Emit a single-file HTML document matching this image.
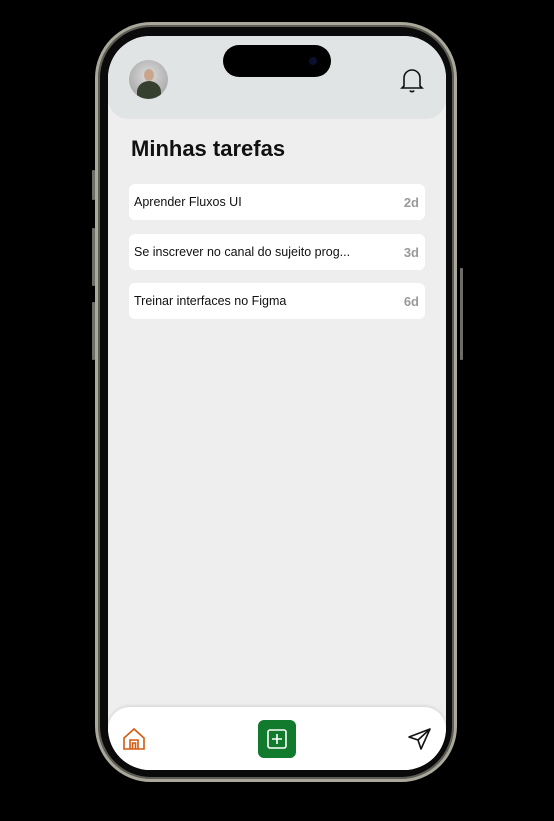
<!DOCTYPE html>
<html><head><style>
body{margin:0;background:#000;width:554px;height:821px;position:relative;overflow:hidden;font-family:"Liberation Sans",sans-serif}
.frame{position:absolute;left:95px;top:22px;width:362px;height:760px;border-radius:56px;border:3px solid #a9a89b;box-sizing:border-box;background:#0a0a0a;box-shadow:inset 0 0 0 2px #5e5d55}
.btn{position:absolute;background:#6f6e66;width:3px;border-radius:1px}
.screen{position:absolute;left:108px;top:36px;width:338px;height:734px;border-radius:42px;background:#eeeeee;overflow:hidden}
.head{position:absolute;left:0;top:0;width:338px;height:83px;background:#e1e4e5;border-radius:0 0 20px 20px}
.island{position:absolute;left:115px;top:9px;width:108px;height:32px;background:#000;border-radius:16px}
.avatar{position:absolute;left:21px;top:24px;width:39px;height:39px;border-radius:50%;background:radial-gradient(circle at 50% 40%,#ddd,#999);overflow:hidden}
h1{position:absolute;left:23px;top:100px;margin:0;font-size:22px;font-weight:bold;color:#111}
.card{position:absolute;left:21px;width:296px;height:36px;background:#fff;border-radius:6px;font-size:12.5px;color:#111}
.card span{position:absolute;left:5px;top:11px}
.card b{position:absolute;right:6px;top:11px;color:#999;font-weight:bold;font-size:13px}
.bar{position:absolute;left:0;top:671px;width:338px;height:63px;background:#fff;border-radius:22px 22px 0 0;box-shadow:0 -1px 3px rgba(0,0,0,.12)}
.plus{position:absolute;left:150px;top:13px;width:38px;height:38px;background:#127a2c;border-radius:6px}
</style></head><body>
<div class="btn" style="left:92px;top:170px;height:30px"></div>
<div class="btn" style="left:92px;top:228px;height:58px"></div>
<div class="btn" style="left:92px;top:302px;height:58px"></div>
<div class="btn" style="left:460px;top:268px;height:92px"></div>
<div class="frame"></div>
<div class="screen">
<div class="head">
<div class="avatar"><div style="position:absolute;left:15px;top:9px;width:10px;height:12px;border-radius:50%;background:#c9a58c"></div><div style="position:absolute;left:8px;top:21px;width:24px;height:22px;border-radius:50% 50% 0 0;background:#35402e"></div></div>
<svg style="position:absolute;left:292px;top:31px" width="24" height="26" viewBox="0 0 24 26" fill="none" stroke="#111" stroke-width="1.6"><path d="M4 19V11a8 8 0 0116 0v8l2 2H2z"/><path d="M10 23.5a2.2 2 0 004 0"/></svg>
</div>
<div class="island"><div style="position:absolute;left:86px;top:12px;width:8px;height:8px;border-radius:50%;background:#0b1030"></div></div>
<h1>Minhas tarefas</h1>
<div class="card" style="top:148px"><span>Aprender Fluxos UI</span><b>2d</b></div>
<div class="card" style="top:198px"><span>Se inscrever no canal do sujeito prog...</span><b>3d</b></div>
<div class="card" style="top:247px"><span>Treinar interfaces no Figma</span><b>6d</b></div>
<div class="bar">
<svg style="position:absolute;left:14px;top:20px" width="24" height="24" viewBox="0 0 24 24" fill="none" stroke="#d35a10" stroke-width="1.6"><path d="M2 11L12 2l10 9v11H2z"/><path d="M8 22v-9h8v9"/><path d="M10.5 22v-6h3v6"/></svg>
<div class="plus"><svg style="position:absolute;left:9px;top:9px" width="20" height="20" viewBox="0 0 20 20" fill="none" stroke="#fff" stroke-width="1.6"><rect x="1" y="1" width="18" height="18" rx="2"/><path d="M10 5v10M5 10h10"/></svg></div>
<svg style="position:absolute;left:299px;top:20px" width="25" height="25" viewBox="0 0 25 25" fill="none" stroke="#111" stroke-width="1.6" stroke-linejoin="round"><path d="M23 2L2 10l9 3 3 9z"/><path d="M23 2L11 13"/></svg>
</div>
</div>
</body></html>
